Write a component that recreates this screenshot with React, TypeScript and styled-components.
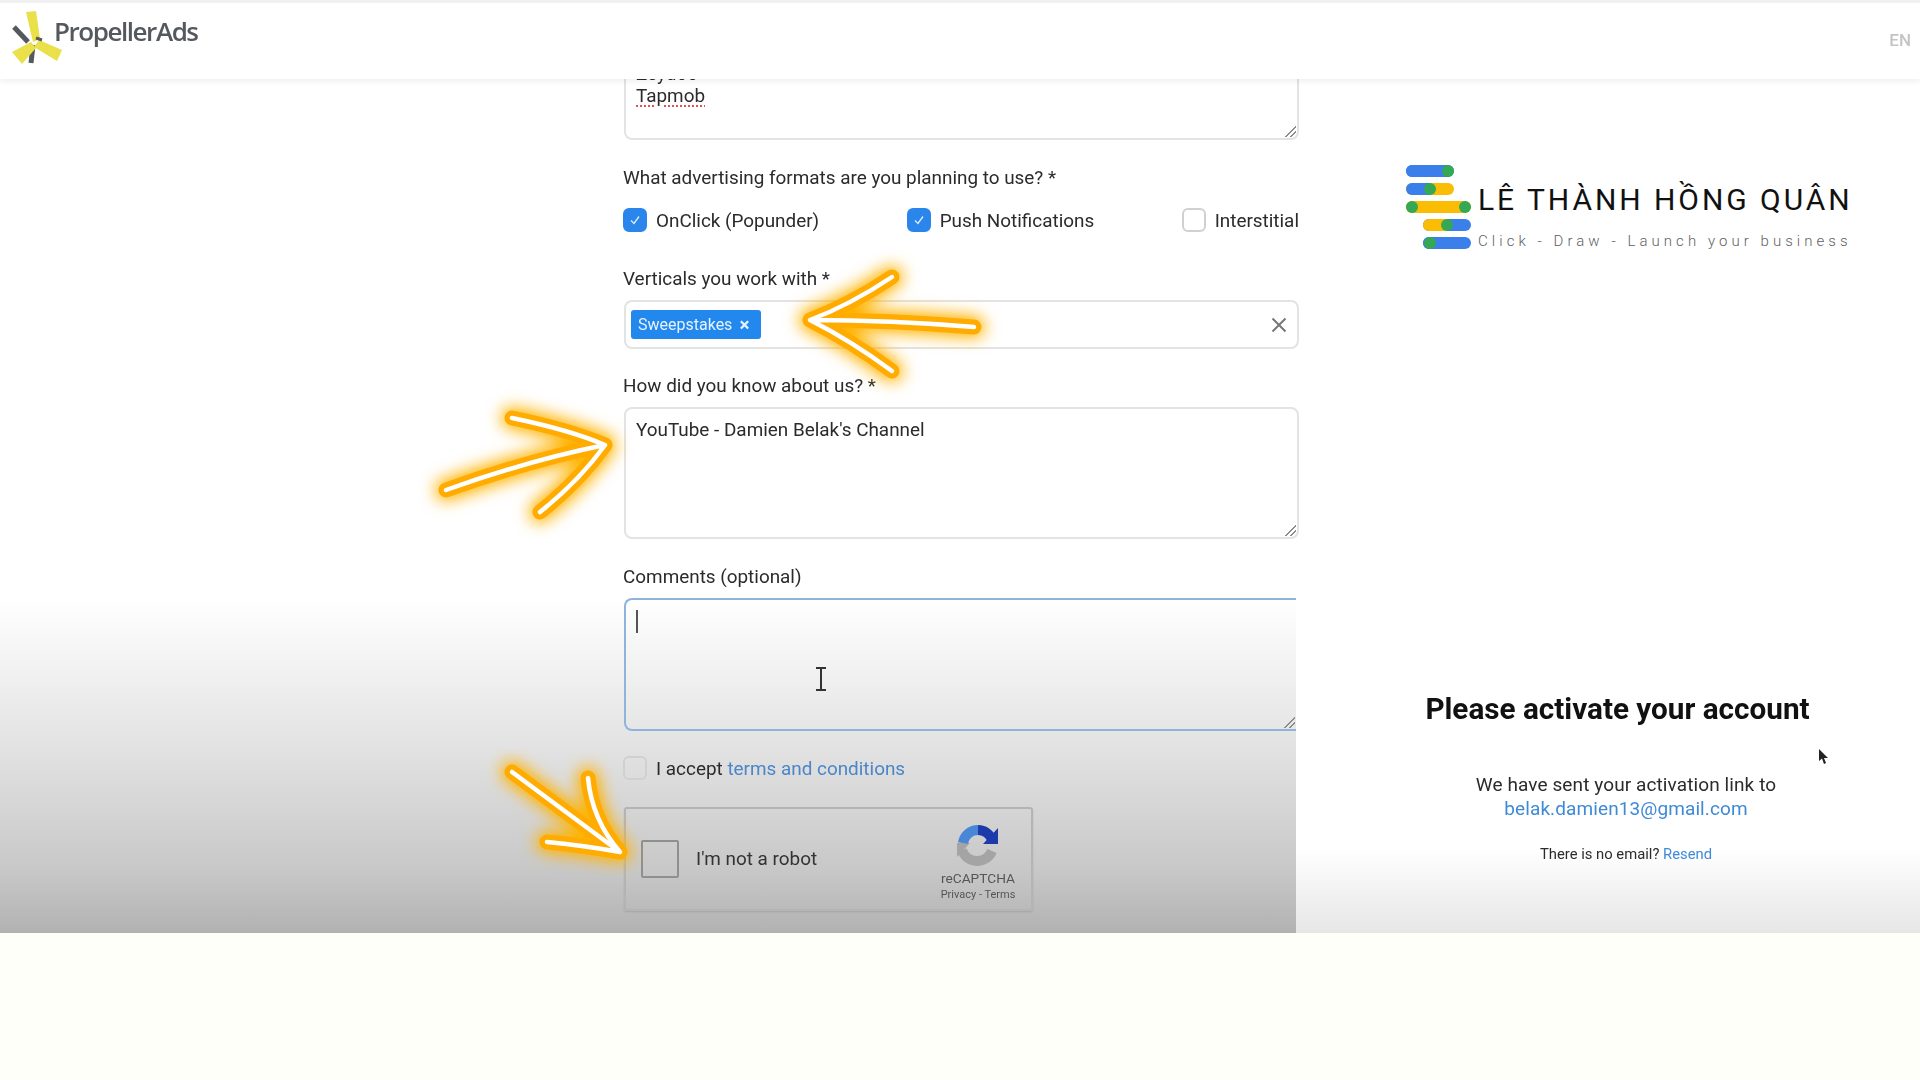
import React from "react";
import styled, { createGlobalStyle } from "styled-components";

const GlobalStyle = createGlobalStyle`
  html, body {
    margin: 0;
    padding: 0;
    background: #fffffa;
    font-family: Roboto, "Liberation Sans", sans-serif;
    color: #2b2b2b;
  }
  * { box-sizing: border-box; }
`;

const Root = styled.div`
  width: 1920px;
  height: 1080px;
  overflow: hidden;
  background: #fffffa;
`;

const Video = styled.div`
  position: relative;
  width: 1920px;
  height: 933px;
  display: flex;
  flex-direction: column;
  background: #fff;
  overflow: hidden;
`;

const Header = styled.header`
  position: relative;
  z-index: 3;
  height: 79px;
  flex: none;
  display: flex;
  align-items: center;
  justify-content: space-between;
  padding: 0 9px 2px 10px;
  background: #fff;
  border-top: 3px solid #f1f1f1;
  box-shadow: 0 3px 6px rgba(0, 0, 0, 0.06);
`;

const Propeller = styled.div`
  display: flex;
  align-items: center;
  margin-top: -7px;
`;

const PropellerName = styled.span`
  margin: -11px 0 0 -10px;
  font-family: "Open Sans", sans-serif;
  font-size: 26px;
  font-weight: 600;
  letter-spacing: -1.45px;
  color: #55585c;
  filter: blur(0.6px);
`;

const Lang = styled.span`
  font-size: 17px;
  font-weight: 500;
  color: #c4c4c4;
  filter: blur(0.5px);
`;

const Columns = styled.div`
  flex: 1;
  display: flex;
  min-height: 0;
`;

const Left = styled.main`
  position: relative;
  z-index: 1;
  width: 1296px;
  flex: none;
  padding-left: 624px;
  background: linear-gradient(
    180deg,
    #fff 0,
    #fff 520px,
    #e2e2e2 670px,
    #c8c8c8 790px,
    #b2b2b2 854px
  );
`;

const Form = styled.form`
  width: 675px;
  margin-top: -28px;
  display: flex;
  flex-direction: column;
  font-size: 18.9px;
  filter: blur(0.6px);
`;

const FieldLabel = styled.div<{ $gap: number }>`
  margin: ${(p) => p.$gap}px 0 10px -1px;
  height: 22px;
  line-height: 22px;
  white-space: nowrap;
`;

const TextBox = styled.div<{ $height: number; $focus?: boolean }>`
  position: relative;
  height: ${(p) => p.$height}px;
  width: ${(p) => (p.$focus ? "672px" : "675px")};
  padding: 10px 10px;
  line-height: 22px;
  border: 2px solid ${(p) => (p.$focus ? "#8fb4d9" : "#e3e3e3")};
  border-right-width: ${(p) => (p.$focus ? 0 : 2)}px;
  border-radius: ${(p) => (p.$focus ? "8px 0 0 8px" : "8px")};
  &:after {
    content: "";
    position: absolute;
    right: 1px;
    bottom: 1px;
    width: 11px;
    height: 11px;
    background: linear-gradient(
      135deg,
      transparent 48%,
      #8b8b8b 48%,
      #8b8b8b 56%,
      transparent 56%,
      transparent 72%,
      #8b8b8b 72%,
      #8b8b8b 80%,
      transparent 80%
    );
  }
`;

const Misspelled = styled.span`
  text-decoration: underline dotted #e0505a 2px;
  text-underline-offset: 3px;
`;

const FormatRow = styled.div`
  display: flex;
  justify-content: space-between;
  height: 24px;
  margin: 9px 0 0 -1px;
`;

const CheckItem = styled.label`
  display: flex;
  align-items: center;
  gap: 9px;
  white-space: nowrap;
`;

const CheckBox = styled.span<{ $on?: boolean }>`
  width: 24px;
  height: 24px;
  flex: none;
  display: flex;
  align-items: center;
  justify-content: center;
  border-radius: 6px;
  background: ${(p) => (p.$on ? "#2a86ea" : "transparent")};
  border: 2px solid ${(p) => (p.$on ? "#2a86ea" : "#d0d0d0")};
`;

const Select = styled.div`
  height: 49px;
  display: flex;
  align-items: center;
  justify-content: space-between;
  padding: 0 9px 0 5px;
  border: 2px solid #e3e3e3;
  border-radius: 8px;
`;

const Tag = styled.span`
  height: 29px;
  width: 130px;
  display: flex;
  align-items: center;
  gap: 7px;
  padding-left: 7px;
  border-radius: 3px;
  background: #2288ee;
  color: #e6f2ff;
  font-size: 16px;
`;

const TagClose = styled.span`
  font-size: 19px;
  font-weight: 700;
  line-height: 16px;
`;

const Caret = styled.span`
  display: block;
  width: 2px;
  height: 23px;
  background: #555;
`;

const TextCursor = styled.svg`
  position: absolute;
  left: 189px;
  top: 67px;
`;

const AcceptRow = styled.label`
  display: flex;
  align-items: center;
  gap: 9px;
  height: 24px;
  margin: 25px 0 0 -1px;
`;

const Link = styled.a`
  color: #4a86c8;
`;

const Captcha = styled.div`
  width: 409px;
  height: 104px;
  margin-top: 27px;
  display: flex;
  align-items: center;
  padding: 0 15px 0 15px;
  border: 2px solid #b4b4b4;
  border-radius: 3px;
  box-shadow: 0 1px 2px rgba(0, 0, 0, 0.12);
`;

const CaptchaBox = styled.span`
  width: 38px;
  height: 38px;
  flex: none;
  border: 2px solid #8f8f8f;
  border-radius: 2px;
`;

const CaptchaText = styled.span`
  margin: -1px 0 0 17px;
  flex: 1;
  color: #333;
`;

const CaptchaBrand = styled.div`
  width: 76px;
  margin-top: 7px;
  display: flex;
  flex-direction: column;
  align-items: center;
  white-space: nowrap;
  color: #555;
  font-size: 13.7px;
  line-height: 15px;
  svg {
    margin-bottom: 5px;
  }
`;

const CaptchaLegal = styled.span`
  font-size: 11px;
  line-height: 15px;
  margin-top: 1px;
`;

const Right = styled.aside`
  flex: 1;
  padding-top: 86px;
  background: linear-gradient(180deg, #fff 0, #fff 770px, #e6e6e6 854px);
`;

const Brand = styled.div`
  display: flex;
  gap: 6px;
  padding-left: 110px;
  height: 87px;
`;

const BrandText = styled.div`
  display: flex;
  flex-direction: column;
  padding-top: 17px;
  white-space: nowrap;
`;

const BrandTitle = styled.div`
  font-size: 30px;
  line-height: 36px;
  letter-spacing: 2.95px;
  color: #111;
`;

const BrandTagline = styled.div`
  margin-top: 13px;
  font-size: 15px;
  font-weight: 300;
  line-height: 20px;
  letter-spacing: 4.05px;
  color: #5f5f5f;
`;

const Notice = styled.section`
  margin-top: 440px;
  padding-left: 36px;
  text-align: center;
  filter: blur(0.6px);
`;

const NoticeTitle = styled.h1`
  margin: 0 17px 0 0;
  font-size: 29.7px;
  line-height: 34px;
  font-weight: 700;
  color: #111;
`;

const NoticeBody = styled.p`
  margin: 47px 0 0;
  font-size: 19px;
  line-height: 23px;
  letter-spacing: 0.1px;
  color: #2b2b2b;
`;

const NoticeMail = styled.a<{ $inline?: boolean }>`
  display: ${(p) => (p.$inline ? "inline" : "block")};
  margin-top: ${(p) => (p.$inline ? 0 : 1)}px;
  color: #3f8ad6;
`;

const NoticeHint = styled.p`
  margin: 24px 0 0;
  font-size: 14.8px;
  line-height: 20px;
`;

const Pointer = styled.svg`
  position: absolute;
  left: 1818px;
  top: 748px;
  z-index: 4;
`;

const Arrows = styled.svg`
  position: absolute;
  left: 0;
  top: 0;
  z-index: 2;
  pointer-events: none;
`;

const ARROWS = [
  "M974 327 Q890 320 810 320 M892 277 Q850 305 810 320 Q850 340 892 371",
  "M446 490 Q530 460 605 445 M512 418 Q570 430 605 445 Q580 480 540 512",
  "M512 772 Q570 815 620 852 M588 778 Q592 820 620 852 Q580 845 547 842",
];

const BARS = [
  { y: 165, from: 1406, to: 1454, left: "#3b7fea", right: "#3b7fea", dots: [1448] },
  { y: 183, from: 1406, to: 1454, left: "#3b7fea", right: "#fbbc04", dots: [1430] },
  { y: 201, from: 1406, to: 1471, left: "#fbbc04", right: "#fbbc04", dots: [1412, 1465] },
  { y: 219, from: 1423, to: 1471, left: "#fbbc04", right: "#3b7fea", dots: [1447] },
  { y: 237, from: 1423, to: 1471, left: "#3b7fea", right: "#3b7fea", dots: [1430] },
];

const BrandMark = () => (
  <svg width="66" height="84" viewBox="1406 165 66 84">
    {BARS.map((b) => {
      const mid = (b.dots.length === 1 ? b.dots[0] : b.from + 6) as number;
      return (
        <g key={b.y}>
          <rect x={b.from} y={b.y} width={b.to - b.from} height={12} rx={6} fill={b.right} />
          <path
            d={`M${mid} ${b.y}H${b.from + 6}a6 6 0 0 0 0 12H${mid}z`}
            fill={b.left}
          />
          {b.dots.map((x) => (
            <circle key={x} cx={x} cy={b.y + 6} r={6} fill="#34a853" />
          ))}
        </g>
      );
    })}
  </svg>
);

const PropellerMark = () => (
  <svg width="54" height="56" viewBox="0 0 54 56">
    <path d="M4 18 L18 33" stroke="#55585c" strokeWidth="5" />
    <path d="M23 36 L21 54" stroke="#55585c" strokeWidth="5" />
    <path d="M16 3 L26 2 L30 30 L23 33z" fill="#e9e04a" />
    <path d="M29 31 L52 41 L47 52 L24 38z" fill="#e9e04a" />
    <path d="M21 33 L2 43 L12 55 L26 39z" fill="#e9e04a" />
    <path d="M26 29 L32 31" stroke="#55585c" strokeWidth="3" />
  </svg>
);

const Check = () => (
  <svg width="14" height="14" viewBox="0 0 14 14">
    <path d="M3 7.5 L6 10.5 L11 3.5" fill="none" stroke="#d8ebff" strokeWidth="1.4" />
  </svg>
);

const ClearIcon = () => (
  <svg width="18" height="18" viewBox="0 0 18 18">
    <path d="M2.5 2.5 L15.5 15.5 M15.5 2.5 L2.5 15.5" stroke="#777" strokeWidth="2" />
  </svg>
);

const RecaptchaLogo = () => (
  <svg width="42" height="42" viewBox="0 0 42 42">
    <path d="M5 26 A16 16 0 0 0 35 27" fill="none" stroke="#a4a4a4" strokeWidth="10" />
    <path d="M0 19 L13 19 L0 33z" fill="#a4a4a4" />
    <path d="M6 19 A15 15 0 0 1 21 6" fill="none" stroke="#4a86d8" strokeWidth="10" />
    <path d="M21 6 A15 15 0 0 1 35 16" fill="none" stroke="#1c3aa9" strokeWidth="10" />
    <path d="M41 4 L41 20 L26 20z" fill="#1c3aa9" />
  </svg>
);

const App = () => (
  <Root>
    <GlobalStyle />
    <Video>
      <Header>
        <Propeller>
          <PropellerMark />
          <PropellerName>PropellerAds</PropellerName>
        </Propeller>
        <Lang>EN</Lang>
      </Header>
      <Columns>
        <Left>
          <Form>
            <TextBox $height={89}>
              Zeydoo
              <br />
              <Misspelled>Tapmob</Misspelled>
            </TextBox>
            <FieldLabel $gap={27}>What advertising formats are you planning to use? *</FieldLabel>
            <FormatRow>
              <CheckItem>
                <CheckBox $on>
                  <Check />
                </CheckBox>
                OnClick (Popunder)
              </CheckItem>
              <CheckItem>
                <CheckBox $on>
                  <Check />
                </CheckBox>
                Push Notifications
              </CheckItem>
              <CheckItem>
                <CheckBox />
                Interstitial
              </CheckItem>
            </FormatRow>
            <FieldLabel $gap={36}>Verticals you work with *</FieldLabel>
            <Select>
              <Tag>
                Sweepstakes <TagClose>×</TagClose>
              </Tag>
              <ClearIcon />
            </Select>
            <FieldLabel $gap={26}>How did you know about us? *</FieldLabel>
            <TextBox $height={132}>YouTube - Damien Belak's Channel</TextBox>
            <FieldLabel $gap={27}>Comments (optional)</FieldLabel>
            <TextBox $height={133} $focus>
              <Caret />
              <TextCursor width="12" height="24" viewBox="0 0 12 24">
                <path d="M1 1 H11 M6 1 V23 M1 23 H11" stroke="#333" strokeWidth="2" fill="none" />
              </TextCursor>
            </TextBox>
            <AcceptRow>
              <CheckBox />
              <span>
                I accept <Link>terms and conditions</Link>
              </span>
            </AcceptRow>
            <Captcha>
              <CaptchaBox />
              <CaptchaText>I'm not a robot</CaptchaText>
              <CaptchaBrand>
                <RecaptchaLogo />
                <span>reCAPTCHA</span>
                <CaptchaLegal>Privacy - Terms</CaptchaLegal>
              </CaptchaBrand>
            </Captcha>
          </Form>
        </Left>
        <Right>
          <Brand>
            <BrandMark />
            <BrandText>
              <BrandTitle>LÊ THÀNH HỒNG QUÂN</BrandTitle>
              <BrandTagline>Click - Draw - Launch your business</BrandTagline>
            </BrandText>
          </Brand>
          <Notice>
            <NoticeTitle>Please activate your account</NoticeTitle>
            <NoticeBody>
              We have sent your activation link to
              <NoticeMail>belak.damien13@gmail.com</NoticeMail>
            </NoticeBody>
            <NoticeHint>
              There is no email? <NoticeMail $inline>Resend</NoticeMail>
            </NoticeHint>
          </Notice>
        </Right>
      </Columns>
      <Arrows width="1920" height="933" viewBox="0 0 1920 933" fill="none" strokeLinecap="round" strokeLinejoin="round">
        <defs>
          <filter id="glow" x="-30%" y="-30%" width="160%" height="160%">
            <feGaussianBlur stdDeviation="8" />
          </filter>
        </defs>
        {ARROWS.map((d) => (
          <g key={d}>
            <path d={d} stroke="#ffb300" strokeWidth="22" filter="url(#glow)" />
            <path d={d} stroke="#ffab00" strokeWidth="15" />
            <path d={d} stroke="#fff" strokeWidth="4.5" />
          </g>
        ))}
      </Arrows>
      <Pointer width="12" height="18" viewBox="0 0 12 18">
        <path d="M1 1 L1 13 L4 10.5 L6 16 L8 15 L6 10 L10 10z" fill="#222" />
      </Pointer>
    </Video>
  </Root>
);

export default App;
